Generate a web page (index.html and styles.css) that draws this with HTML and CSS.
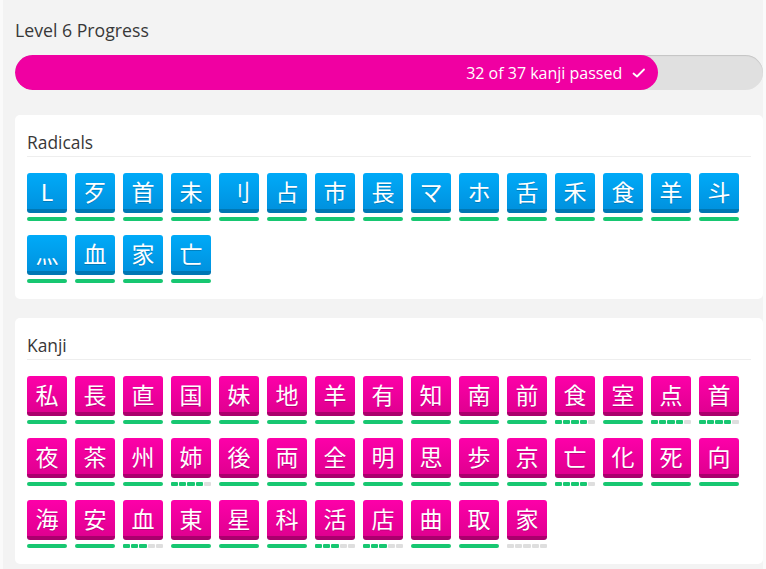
FILE: index.html
```html
<!DOCTYPE html>
<html>
<head>
<meta charset="utf-8">
<link rel="stylesheet" href="styles.css">
</head>
<body>
<div class="panel">
  <h1 class="heading">Level 6 Progress</h1>
  <div class="progress">
    <div class="progress-fill" style="width:86%">
      <span class="progress-text">32 of 37 kanji passed</span>
      <svg class="check" width="16" height="16" viewBox="0 0 16 16"><polyline points="2.5,8.5 6,11.5 13,4.5" fill="none" stroke="#fff" stroke-width="1.8" stroke-linecap="round" stroke-linejoin="round"/></svg>
    </div>
  </div>

  <section class="card">
    <h2 class="card-title">Radicals</h2>
    <div class="grid">
      <div class="item"><div class="tile radical">L</div><div class="bar full"></div></div>
      <div class="item"><div class="tile radical">歹</div><div class="bar full"></div></div>
      <div class="item"><div class="tile radical">首</div><div class="bar full"></div></div>
      <div class="item"><div class="tile radical">未</div><div class="bar full"></div></div>
      <div class="item"><div class="tile radical">刂</div><div class="bar full"></div></div>
      <div class="item"><div class="tile radical">占</div><div class="bar full"></div></div>
      <div class="item"><div class="tile radical">市</div><div class="bar full"></div></div>
      <div class="item"><div class="tile radical">長</div><div class="bar full"></div></div>
      <div class="item"><div class="tile radical">マ</div><div class="bar full"></div></div>
      <div class="item"><div class="tile radical">ホ</div><div class="bar full"></div></div>
      <div class="item"><div class="tile radical">舌</div><div class="bar full"></div></div>
      <div class="item"><div class="tile radical">禾</div><div class="bar full"></div></div>
      <div class="item"><div class="tile radical">食</div><div class="bar full"></div></div>
      <div class="item"><div class="tile radical">羊</div><div class="bar full"></div></div>
      <div class="item"><div class="tile radical">斗</div><div class="bar full"></div></div>
      <div class="item"><div class="tile radical">灬</div><div class="bar full"></div></div>
      <div class="item"><div class="tile radical">血</div><div class="bar full"></div></div>
      <div class="item"><div class="tile radical">家</div><div class="bar full"></div></div>
      <div class="item"><div class="tile radical">亡</div><div class="bar full"></div></div>
    </div>
  </section>

  <section class="card">
    <h2 class="card-title">Kanji</h2>
    <div class="grid">
      <div class="item"><div class="tile kanji">私</div><div class="bar full"></div></div>
      <div class="item"><div class="tile kanji">長</div><div class="bar full"></div></div>
      <div class="item"><div class="tile kanji">直</div><div class="bar full"></div></div>
      <div class="item"><div class="tile kanji">国</div><div class="bar full"></div></div>
      <div class="item"><div class="tile kanji">妹</div><div class="bar full"></div></div>
      <div class="item"><div class="tile kanji">地</div><div class="bar full"></div></div>
      <div class="item"><div class="tile kanji">羊</div><div class="bar full"></div></div>
      <div class="item"><div class="tile kanji">有</div><div class="bar full"></div></div>
      <div class="item"><div class="tile kanji">知</div><div class="bar full"></div></div>
      <div class="item"><div class="tile kanji">南</div><div class="bar full"></div></div>
      <div class="item"><div class="tile kanji">前</div><div class="bar full"></div></div>
      <div class="item"><div class="tile kanji">食</div><div class="bar segs"><i class="on"></i><i class="on"></i><i class="on"></i><i class="on"></i><i></i></div></div>
      <div class="item"><div class="tile kanji">室</div><div class="bar full"></div></div>
      <div class="item"><div class="tile kanji">点</div><div class="bar segs"><i class="on"></i><i class="on"></i><i class="on"></i><i class="on"></i><i></i></div></div>
      <div class="item"><div class="tile kanji">首</div><div class="bar segs"><i class="on"></i><i class="on"></i><i class="on"></i><i class="on"></i><i></i></div></div>

      <div class="item"><div class="tile kanji">夜</div><div class="bar full"></div></div>
      <div class="item"><div class="tile kanji">茶</div><div class="bar full"></div></div>
      <div class="item"><div class="tile kanji">州</div><div class="bar full"></div></div>
      <div class="item"><div class="tile kanji">姉</div><div class="bar segs"><i class="on"></i><i class="on"></i><i class="on"></i><i class="on"></i><i></i></div></div>
      <div class="item"><div class="tile kanji">後</div><div class="bar full"></div></div>
      <div class="item"><div class="tile kanji">両</div><div class="bar full"></div></div>
      <div class="item"><div class="tile kanji">全</div><div class="bar full"></div></div>
      <div class="item"><div class="tile kanji">明</div><div class="bar full"></div></div>
      <div class="item"><div class="tile kanji">思</div><div class="bar full"></div></div>
      <div class="item"><div class="tile kanji">歩</div><div class="bar full"></div></div>
      <div class="item"><div class="tile kanji">京</div><div class="bar full"></div></div>
      <div class="item"><div class="tile kanji">亡</div><div class="bar segs"><i class="on"></i><i class="on"></i><i class="on"></i><i class="on"></i><i></i></div></div>
      <div class="item"><div class="tile kanji">化</div><div class="bar full"></div></div>
      <div class="item"><div class="tile kanji">死</div><div class="bar full"></div></div>
      <div class="item"><div class="tile kanji">向</div><div class="bar full"></div></div>

      <div class="item"><div class="tile kanji">海</div><div class="bar full"></div></div>
      <div class="item"><div class="tile kanji">安</div><div class="bar full"></div></div>
      <div class="item"><div class="tile kanji">血</div><div class="bar segs"><i class="on"></i><i class="on"></i><i class="on"></i><i></i><i></i></div></div>
      <div class="item"><div class="tile kanji">東</div><div class="bar full"></div></div>
      <div class="item"><div class="tile kanji">星</div><div class="bar full"></div></div>
      <div class="item"><div class="tile kanji">科</div><div class="bar full"></div></div>
      <div class="item"><div class="tile kanji">活</div><div class="bar segs"><i class="on"></i><i class="on"></i><i class="on"></i><i></i><i></i></div></div>
      <div class="item"><div class="tile kanji">店</div><div class="bar segs"><i class="on"></i><i class="on"></i><i class="on"></i><i></i><i></i></div></div>
      <div class="item"><div class="tile kanji">曲</div><div class="bar full"></div></div>
      <div class="item"><div class="tile kanji">取</div><div class="bar full"></div></div>
      <div class="item"><div class="tile kanji">家</div><div class="bar segs"><i></i><i></i><i></i><i></i><i></i></div></div>
    </div>
  </section>
</div>
</body>
</html>
```

FILE: styles.css
```css
html, body {
  margin: 0;
  padding: 0;
  background: #fafafa;
}

body {
  font-family: "Open Sans", "Noto Sans", "Noto Sans CJK JP", sans-serif;
  color: #333;
}

.panel {
  margin-left: 3px;
  width: 760px;
  min-height: 569px;
  box-sizing: border-box;
  padding: 19px 0 0 12px;
  background: #f3f3f3;
}

.heading {
  margin: 0;
  font-size: 17.7px;
  line-height: 22px;
  font-weight: 400;
  color: #383838;
}

.progress {
  margin-top: 14px;
  height: 35px;
  border-radius: 18px;
  background: #e0e0e0;
  box-shadow: inset 0 1px 1px rgba(0, 0, 0, 0.13);
  overflow: hidden;
}

.progress-fill {
  height: 100%;
  border-radius: 18px;
  background: #f000a2;
  display: flex;
  align-items: center;
  justify-content: flex-end;
  box-sizing: border-box;
  padding-right: 11px;
  color: #fff;
  font-size: 16px;
}

.progress-text {
  margin-right: 9px;
}

.check {
  display: block;
}

.card {
  margin-top: 25px;
  background: #fff;
  border-radius: 5px;
  padding: 16px 12px 16px 12px;
}

.card + .card {
  margin-top: 19px;
}

.card-title {
  margin: 0;
  font-size: 17.4px;
  line-height: 23px;
  font-weight: 400;
  color: #383838;
  padding-bottom: 2px;
  border-bottom: 1px solid #eeeeee;
}

.grid {
  margin-top: 16px;
  display: flex;
  flex-wrap: wrap;
  column-gap: 8px;
  row-gap: 14px;
}

.item {
  width: 40px;
}

.tile {
  height: 36px;
  border-bottom: 4px solid;
  border-radius: 3px;
  color: #fff;
  font-family: "Noto Sans CJK JP", "Noto Sans", sans-serif;
  font-size: 23px;
  line-height: 37px;
  text-align: center;
  text-shadow: 0 1px 0 rgba(0, 0, 0, 0.2);
}

.radical {
  background: linear-gradient(#00aaf8, #0092df);
  border-bottom-color: #0077b3;
}

.kanji {
  background: linear-gradient(#fd00a9, #e00090);
  border-bottom-color: #aa006d;
}

.bar {
  margin-top: 4px;
  height: 4px;
}

.bar.full {
  background: #17c771;
  border-radius: 2px;
}

.bar.segs {
  display: flex;
  gap: 1px;
}

.bar.segs i {
  flex: 1;
  background: #dedede;
  border-radius: 1px;
}

.bar.segs i.on {
  background: #17c771;
}
```
